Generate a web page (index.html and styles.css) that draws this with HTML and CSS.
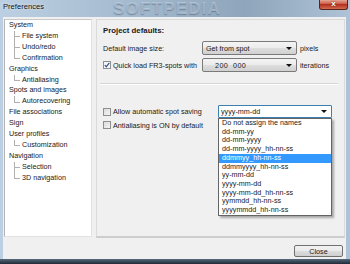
FILE: index.html
```html
<!DOCTYPE html>
<html lang="en">
<head>
    <meta charset="UTF-8">
    <title>Preferences</title>
    <link rel="stylesheet" href="styles.css">
</head>
<body>
    <div class="window">
        <div class="titlebar">
            <span class="title">Preferences</span>
            <span class="watermark">SOFTPEDIA</span>
            <span class="close-x">x</span>
        </div>
        <div class="client">
            <div class="main">
                <!-- Settings tree -->
                <ul class="tree">
                    <li>System
                        <ul class="sub">
                            <li>File system</li>
                            <li>Undo/redo</li>
                            <li>Confirmation</li>
                        </ul>
                    </li>
                    <li>Graphics
                        <ul class="sub">
                            <li>Antialiasing</li>
                        </ul>
                    </li>
                    <li>Spots and images
                        <ul class="sub">
                            <li>Autorecovering</li>
                        </ul>
                    </li>
                    <li>File associations</li>
                    <li>Sign</li>
                    <li>User profiles
                        <ul class="sub">
                            <li>Customization</li>
                        </ul>
                    </li>
                    <li>Navigation
                        <ul class="sub">
                            <li>Selection</li>
                            <li>3D navigation</li>
                        </ul>
                    </li>
                </ul>

                <!-- Settings page -->
                <div class="panel">
                    <div class="heading">Project defaults:</div>
                    <div class="row">
                        <span class="label">Default image size:</span>
                        <div class="combo"><span>Get from spot</span><i class="arrow"></i></div>
                        <span class="unit">pixels</span>
                    </div>
                    <div class="row">
                        <span class="label"><i class="check checked"><svg width="6" height="6" viewBox="0 0 6 6"><path d="M0.8 3.1 L2.3 4.8 L5.3 0.8" fill="none" stroke="#3b5a9a" stroke-width="1.3"/></svg></i>Quick load FR3-spots with</span>
                        <div class="combo combo-num"><span>200&nbsp;&nbsp;000</span><i class="arrow"></i></div>
                        <span class="unit">iterations</span>
                    </div>
                    <div class="separator"></div>
                    <div class="row row-save">
                        <span class="label label-wide"><i class="check"></i>Allow automatic spot saving</span>
                        <div class="combo combo-open">
                            <span>yyyy-mm-dd</span><i class="arrow"></i>
                            <ul class="dropdown">
                                <li>Do not assign the names</li>
                                <li>dd-mm-yy</li>
                                <li>dd-mm-yyyy</li>
                                <li>dd-mm-yyyy_hh-nn-ss</li>
                                <li class="selected">ddmmyy_hh-nn-ss</li>
                                <li>ddmmyyyy_hh-nn-ss</li>
                                <li>yy-mm-dd</li>
                                <li>yyyy-mm-dd</li>
                                <li>yyyy-mm-dd_hh-nn-ss</li>
                                <li>yymmdd_hh-nn-ss</li>
                                <li>yyyymmdd_hh-nn-ss</li>
                            </ul>
                        </div>
                    </div>
                    <div class="row row-aa">
                        <span class="label"><i class="check"></i>Antialiasing is ON by default</span>
                    </div>
                </div>
            </div>
            <div class="footer">
                <button class="btn">Close</button>
            </div>
        </div>
    </div>
</body>
</html>
```

FILE: styles.css
```css
body {
    margin: 0;
    font-family: 'Liberation Sans', Arial, sans-serif;
    font-size: 7.2px;
    color: #1a1a1a;
    overflow: hidden;
}
.window {
    width: 350px;
    height: 264px;
    display: flex;
    flex-direction: column;
    background:
        linear-gradient(to bottom, transparent 259px, #56697c 259px, #1f2a35),
        linear-gradient(to right, #bdd0e3, #a2b8cc 40%, #8ea5bb 70%, #aec3d7);
}
.titlebar {
    height: 17px;
    position: relative;
    display: flex;
    align-items: flex-start;
    padding-left: 3px;
    flex: none;
}
.title {
    font-family: 'Liberation Sans', Arial, sans-serif;
    font-size: 7.6px;
    line-height: 14px;
    color: #111;
    text-shadow: 0 0 3px rgba(255, 255, 255, 0.8);
}
.watermark {
    position: absolute;
    left: 113px;
    top: 0;
    font-size: 17px;
    line-height: 17px;
    font-weight: bold;
    letter-spacing: 1.2px;
    color: rgba(205, 218, 232, 0.5);
    text-shadow: 0 1px 1px rgba(50, 70, 95, 0.4);
}
.close-x {
    margin-left: auto;
    margin-right: 2px;
    width: 29px;
    height: 10px;
    box-sizing: border-box;
    border: 1px solid #5e2318;
    border-top: none;
    border-radius: 0 0 3px 3px;
    background: linear-gradient(#e6a493, #c9513f 50%, #b3301c 50%, #d16b52);
    color: #fff;
    font-weight: bold;
    font-size: 8px;
    line-height: 8px;
    text-align: center;
    text-shadow: 0 0 2px #5a1a10;
}
.client {
    margin: 0 4px 0 3px;
    height: 242px;
    background-color: #f0f0f0;
    display: flex;
    flex-direction: column;
}
.main {
    display: flex;
    align-items: flex-start;
    gap: 4px;
    margin: 2px 1px 0 1px;
}
/* Tree */
.tree {
    list-style: none;
    margin: 0;
    padding: 0 0 0 4px;
    width: 88px;
    height: 218px;
    box-sizing: border-box;
    background-color: #fff;
    border: 1px solid #e2e2e2;
    border-left-color: #b4b4b4;
    border-top-color: #c8c8c8;
    line-height: 10.9px;
    white-space: nowrap;
}
.sub {
    list-style: none;
    margin: 0 0 0 5px;
    padding: 0;
}
.sub li {
    position: relative;
    padding-left: 8px;
}
.sub li::before {
    content: '';
    position: absolute;
    left: 0;
    top: 0;
    width: 5px;
    height: 50%;
    border-left: 1px solid #b0b0b0;
    border-bottom: 1px solid #b0b0b0;
}
.sub li:not(:last-child)::after {
    content: '';
    position: absolute;
    left: 0;
    top: 50%;
    bottom: 0;
    border-left: 1px solid #b0b0b0;
}
/* Page */
.panel {
    flex: 1;
    height: 219px;
    box-sizing: border-box;
    border: 1px solid #dadada;
    border-bottom: 2px solid #cdcdcd;
    padding: 5px 6px 0 6px;
}
.heading {
    font-weight: bold;
    font-size: 7.8px;
    line-height: 11px;
}
.row {
    display: flex;
    align-items: center;
    height: 14px;
    margin-top: 3px;
}
.heading + .row {
    margin-top: 5px;
}
.label {
    width: 99px;
    display: flex;
    align-items: center;
    white-space: nowrap;
}
.label-wide {
    width: 115px;
}
.check {
    width: 8px;
    height: 8px;
    box-sizing: border-box;
    margin-right: 2px;
    border: 1px solid #8e8f8f;
    background: linear-gradient(135deg, #dcdcdc, #f4f4f4);
    display: flex;
    align-items: center;
    justify-content: center;
    flex: none;
}
.check.checked {
    background: #f6f6f6;
}
.combo {
    width: 95px;
    height: 14px;
    box-sizing: border-box;
    border: 1px solid #7a7a7a;
    border-radius: 2px;
    background: linear-gradient(#f4f4f4, #ebebeb 50%, #dedede 50%, #d0d0d0);
    display: flex;
    align-items: center;
    padding: 0 4px 0 3px;
    position: relative;
}
.combo-num {
    padding-left: 12px;
    letter-spacing: 0.4px;
}
.arrow {
    margin-left: auto;
    width: 0;
    height: 0;
    border-left: 3px solid transparent;
    border-right: 3px solid transparent;
    border-top: 3px solid #111;
}
.unit {
    margin-left: 3px;
}
.separator {
    margin: 11px 0 0 -3px;
    width: 238px;
    border-top: 1px solid #d5d5d5;
    border-bottom: 1px solid #fff;
}
.row-save {
    margin-top: 20px;
    height: 13px;
}
.row-aa {
    margin-top: 1px;
    height: 12px;
}
.combo-open {
    width: 114px;
    height: 13px;
    border-color: #3c7fb1;
    border-radius: 1px;
    background: #fff;
    padding-left: 2px;
}
/* Open drop-down list */
.dropdown {
    position: absolute;
    left: -1px;
    top: 12px;
    width: 114px;
    box-sizing: border-box;
    list-style: none;
    margin: 0;
    padding: 0;
    background-color: #fff;
    border: 1px solid #646464;
    box-shadow: 2px 2px 2px rgba(0, 0, 0, 0.3);
    line-height: 8.7px;
    z-index: 10;
}
.dropdown li {
    padding-left: 3px;
    white-space: nowrap;
}
.dropdown li.selected {
    background-color: #3399ff;
    color: #fff;
}
.footer {
    display: flex;
    justify-content: flex-end;
    padding: 7px 3px 0 0;
}
.btn {
    width: 49px;
    height: 12px;
    padding: 0;
    font-family: 'Liberation Sans', Arial, sans-serif;
    font-size: 7.2px;
    color: #1a1a1a;
    border: 1px solid #707070;
    border-radius: 2px;
    background: linear-gradient(#f2f2f2, #ebebeb 50%, #dddddd 50%, #cfcfcf);
}
```
